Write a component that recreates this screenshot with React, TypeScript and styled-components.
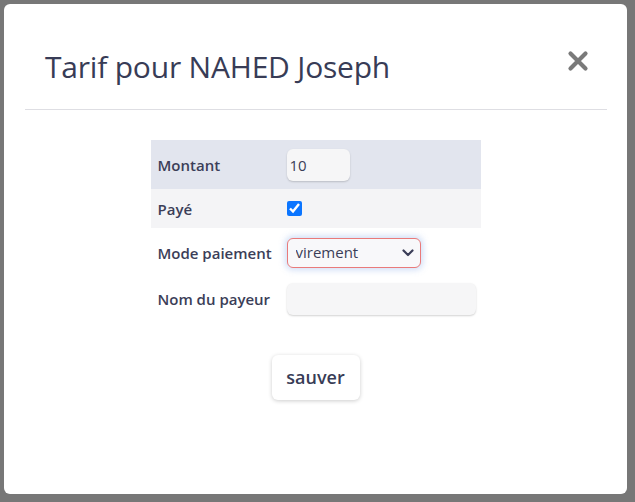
import React from "react";
import styled, { createGlobalStyle } from "styled-components";

const Global = createGlobalStyle`
  html, body { margin: 0; padding: 0; }
  body {
    background: #777777;
    font-family: "Open Sans", "Noto Sans", sans-serif;
    width: 635px;
    height: 502px;
    overflow: hidden;
  }
  * { box-sizing: border-box; }
`;

const Backdrop = styled.div`
  width: 635px;
  height: 502px;
  padding: 4px 8px 8px 4px;
`;

const Modal = styled.div`
  width: 623px;
  height: 490px;
  background: #ffffff;
  border-radius: 6px;
  display: flex;
  flex-direction: column;
`;

const Header = styled.div`
  margin: 0 20px 0 21px;
  height: 106px;
  border-bottom: 1px solid #dedee3;
  display: flex;
  align-items: flex-start;
  justify-content: space-between;
  padding: 43px 17px 0 20px;
`;

const Title = styled.h1`
  margin: 0;
  font-size: 30px;
  font-weight: 500;
  color: #383c56;
  letter-spacing: -0.2px;
  line-height: 40px;
`;

const Close = styled.button`
  border: none;
  background: none;
  padding: 0;
  margin-top: 2px;
  width: 24px;
  height: 24px;
  cursor: pointer;
  display: flex;
`;

const Body = styled.div`
  display: flex;
  flex-direction: column;
  align-items: center;
  padding-top: 30px;
`;

const Table = styled.table`
  width: 330px;
  border-collapse: collapse;
`;

const Row = styled.tr<{ $bg: string; $h: number }>`
  background: ${(p) => p.$bg};
  height: ${(p) => p.$h}px;
`;

const Label = styled.td`
  width: 136px;
  padding: 0 0 0 7px;
  font-size: 15px;
  font-weight: 600;
  color: #3b3e58;
  white-space: nowrap;
`;

const Cell = styled.td`
  padding: 0;
`;

const Input = styled.input<{ $w: number }>`
  width: ${(p) => p.$w}px;
  height: 32px;
  border: none;
  border-radius: 6px;
  background: #f6f6f7;
  box-shadow: 0 1px 2px rgba(0, 0, 0, 0.18);
  font-family: inherit;
  font-size: 15px;
  color: #3b3e58;
  padding: 0 3px;
  outline: none;
  display: block;
`;

const Check = styled.input`
  width: 15px;
  height: 15px;
  margin: 0;
  accent-color: #0b75ff;
  display: block;
`;

const SelectWrap = styled.div`
  position: relative;
  width: 134px;
  height: 30px;
`;

const Select = styled.select`
  appearance: none;
  width: 134px;
  height: 30px;
  border: 1px solid #e97a7a;
  border-radius: 6px;
  background: #f8f8fa;
  box-shadow: 0 0 6px 2px rgba(120, 160, 230, 0.35);
  font-family: inherit;
  font-size: 15px;
  color: #3b3e58;
  padding: 0 0 1px 8px;
  outline: none;
  display: block;
`;

const Chevron = styled.svg`
  position: absolute;
  right: 7px;
  top: 11px;
  pointer-events: none;
`;

const Footer = styled.div`
  padding-top: 35px;
  display: flex;
  justify-content: center;
`;

const SaveButton = styled.button`
  width: 88px;
  height: 45px;
  border: none;
  border-radius: 6px;
  background: #ffffff;
  box-shadow: 0 1px 4px rgba(0, 0, 0, 0.2);
  font-family: inherit;
  font-size: 18px;
  font-weight: 600;
  color: #383c56;
  cursor: pointer;
  padding: 0 0 2px;
`;

export default function App() {
  return (
    <>
      <Global />
      <Backdrop>
        <Modal>
          <Header>
            <Title>Tarif pour NAHED Joseph</Title>
            <Close aria-label="Fermer">
              <svg width="24" height="24" viewBox="0 0 24 24">
                <path d="M4.5 4.5 L19.5 19.5 M19.5 4.5 L4.5 19.5" stroke="#7a7a7a" strokeWidth="4.2" strokeLinecap="round" />
              </svg>
            </Close>
          </Header>
          <Body>
            <Table>
              <tbody>
                <Row $bg="#e2e5ee" $h={49}>
                  <Label>Montant</Label>
                  <Cell><Input $w={63} defaultValue="10" /></Cell>
                </Row>
                <Row $bg="#f4f4f6" $h={39}>
                  <Label>Payé</Label>
                  <Cell><Check type="checkbox" defaultChecked /></Cell>
                </Row>
                <Row $bg="#ffffff" $h={49}>
                  <Label>Mode paiement</Label>
                  <Cell>
                    <SelectWrap>
                      <Select defaultValue="virement">
                        <option value="virement">virement</option>
                        <option value="cheque">chèque</option>
                        <option value="especes">espèces</option>
                      </Select>
                      <Chevron width="12" height="8" viewBox="0 0 12 8">
                        <path d="M1.5 1.5 L6 6 L10.5 1.5" stroke="#3b3e58" strokeWidth="2.2" fill="none" strokeLinecap="round" strokeLinejoin="round" />
                      </Chevron>
                    </SelectWrap>
                  </Cell>
                </Row>
                <Row $bg="#ffffff" $h={43}>
                  <Label>Nom du payeur</Label>
                  <Cell><Input $w={189} defaultValue="" /></Cell>
                </Row>
              </tbody>
            </Table>
          </Body>
          <Footer>
            <SaveButton>sauver</SaveButton>
          </Footer>
        </Modal>
      </Backdrop>
    </>
  );
}
